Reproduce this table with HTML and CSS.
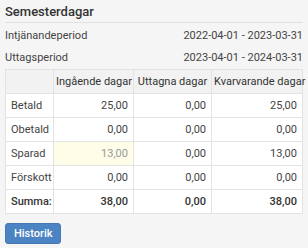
FILE: index.html
```html
<!DOCTYPE html>
<html lang="sv">
<head>
    <meta charset="UTF-8">
    <title>Semesterdagar</title>
    <link rel="stylesheet" href="styles.css">
</head>
<body>
    <div class="panel">
        <h2 class="panel-title">Semesterdagar</h2>
        <div class="period-row">
            <span>Intjänandeperiod</span>
            <span>2022-04-01 - 2023-03-31</span>
        </div>
        <div class="period-row">
            <span>Uttagsperiod</span>
            <span>2023-04-01 - 2024-03-31</span>
        </div>
        <table class="days-table">
            <colgroup>
                <col class="col-type">
                <col class="col-in">
                <col class="col-used">
                <col>
            </colgroup>
            <thead>
                <tr>
                    <th></th>
                    <th>Ingående dagar</th>
                    <th>Uttagna dagar</th>
                    <th>Kvarvarande dagar</th>
                </tr>
            </thead>
            <tbody>
                <tr>
                    <td>Betald</td>
                    <td class="num">25,00</td>
                    <td class="num">0,00</td>
                    <td class="num">25,00</td>
                </tr>
                <tr>
                    <td>Obetald</td>
                    <td class="num">0,00</td>
                    <td class="num">0,00</td>
                    <td class="num">0,00</td>
                </tr>
                <tr>
                    <td>Sparad</td>
                    <td class="num readonly">13,00</td>
                    <td class="num">0,00</td>
                    <td class="num">13,00</td>
                </tr>
                <tr>
                    <td>Förskott</td>
                    <td class="num">0,00</td>
                    <td class="num">0,00</td>
                    <td class="num">0,00</td>
                </tr>
                <tr class="sum-row">
                    <td>Summa:</td>
                    <td class="num">38,00</td>
                    <td class="num">0,00</td>
                    <td class="num">38,00</td>
                </tr>
            </tbody>
        </table>
        <button type="button" class="btn">Historik</button>
    </div>
</body>
</html>
```

FILE: styles.css
```css
body {
    margin: 0;
    background-color: #f5f5f5;
    font-family: Roboto, 'Liberation Sans', sans-serif;
    font-size: 11px;
    color: #444;
}
.panel {
    padding: 4px 5px 0 5px;
}
.panel-title {
    margin: 0;
    padding-bottom: 2px;
    border-bottom: 1px solid #e0e0e0;
    font-size: 13px;
    font-weight: 500;
    line-height: 16px;
    color: #333;
}
.period-row {
    display: flex;
    justify-content: space-between;
    line-height: 22px;
}
.period-row:first-of-type {
    margin-top: 2px;
}
.days-table {
    width: 100%;
    border-collapse: collapse;
    table-layout: fixed;
    background-color: #fff;
}
.col-type {
    width: 48px;
}
.col-in {
    width: 80px;
}
.col-used {
    width: 78px;
}
.days-table th,
.days-table td {
    border: 1px solid #e3e3e3;
    height: 23px;
    padding: 0 5px;
    font-weight: normal;
    white-space: nowrap;
}
.days-table th {
    background-color: #f2f2f2;
    color: #333;
    padding: 0 2px;
}
.num {
    text-align: right;
}
.readonly {
    background-color: #fdfde8;
    color: #999;
}
.sum-row td {
    font-weight: 500;
    color: #333;
}
.btn {
    margin-top: 9px;
    height: 21px;
    padding: 0 8px;
    border: 1px solid #4679b3;
    border-radius: 3px;
    background-color: #4c83c3;
    color: #fff;
    font-family: Roboto, 'Liberation Sans', sans-serif;
    font-size: 11px;
    font-weight: 500;
    cursor: pointer;
}
```
